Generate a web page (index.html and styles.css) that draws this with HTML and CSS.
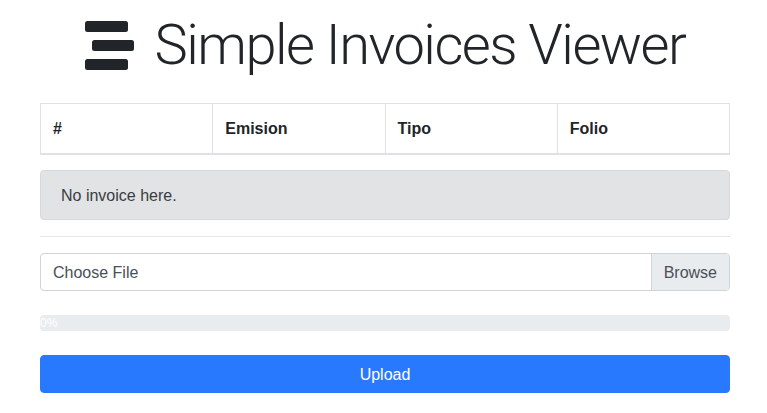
FILE: index.html
```html
<!DOCTYPE html>
<html lang="en">
<head>
<meta charset="utf-8">
<title>Simple Invoices Viewer</title>
<link rel="stylesheet" href="styles.css">
</head>
<body>
<main class="page">
  <h1 class="title">
    <svg class="logo" width="50" height="50" viewBox="0 0 50 50" aria-hidden="true">
      <rect x="0" y="0" width="43" height="11" rx="2.5" fill="#212529"/>
      <rect x="7" y="19" width="42" height="11" rx="2.5" fill="#212529"/>
      <rect x="0" y="38" width="43" height="11" rx="2.5" fill="#212529"/>
    </svg>
    <span class="title-text">Simple Invoices Viewer</span>
  </h1>

  <table class="invoices">
    <thead>
      <tr>
        <th>#</th>
        <th>Emision</th>
        <th>Tipo</th>
        <th>Folio</th>
      </tr>
    </thead>
  </table>

  <div class="alert">No invoice here.</div>

  <hr class="divider">

  <div class="file">
    <span class="file-label">Choose File</span>
    <span class="file-browse">Browse</span>
  </div>

  <div class="progress">
    <div class="progress-bar" style="width:0%">0%</div>
  </div>

  <button class="btn-upload" type="button">Upload</button>
</main>
</body>
</html>
```

FILE: styles.css
```css
* { box-sizing: border-box; }

body {
  margin: 0;
  background: #fff;
  color: #212529;
  font-family: "Liberation Sans", Arial, sans-serif;
  font-size: 16px;
  line-height: 24px;
}

.page {
  margin: 0 37px 0 40px;
  padding-top: 12px;
  display: flex;
  flex-direction: column;
}

.title {
  margin: 0 0 24px;
  display: flex;
  align-items: center;
  justify-content: center;
  gap: 20px;
  height: 67px;
  font-family: Roboto, "Liberation Sans", sans-serif;
  font-weight: 300;
  font-size: 56px;
  letter-spacing: -1.5px;
  line-height: 67px;
  color: #212529;
}

.logo {
  flex: none;
  margin-top: 1px;
}

.invoices {
  width: 100%;
  border-collapse: collapse;
  table-layout: fixed;
  margin-bottom: 15px;
}

.invoices th {
  border: 1px solid #dee2e6;
  border-bottom: 2px solid #dee2e6;
  padding: 13px 12px 11px;
  text-align: left;
  font-weight: 700;
  height: 50px;
}

.alert {
  background: #e2e3e5;
  border: 1px solid #d6d8db;
  border-radius: 4px;
  color: #383d41;
  padding: 13px 20px 11px;
  margin-bottom: 16px;
}

.divider {
  margin: 0 0 16px;
  border: 0;
  border-top: 1px solid rgba(0, 0, 0, 0.1);
}

.file {
  display: flex;
  height: 38px;
  border: 1px solid #ced4da;
  border-radius: 4px;
  color: #495057;
  overflow: hidden;
  margin-bottom: 24px;
}

.file-label {
  flex: 1;
  padding: 7px 12px 5px;
}

.file-browse {
  padding: 7px 12px 5px;
  background: #e9ecef;
  border-left: 1px solid #ced4da;
}

.progress {
  height: 16px;
  background: #e9ecef;
  border-radius: 4px;
  overflow: visible;
  margin-bottom: 24px;
  display: flex;
}

.progress-bar {
  color: #fff;
  font-size: 12px;
  line-height: 16px;
  white-space: nowrap;
}

.btn-upload {
  height: 38px;
  width: 100%;
  border: 1px solid #2979ff;
  background: #2979ff;
  color: #fff;
  border-radius: 4px;
  font-family: "Liberation Sans", Arial, sans-serif;
  font-size: 16px;
  line-height: 24px;
  padding: 7px 12px 5px;
}
```
